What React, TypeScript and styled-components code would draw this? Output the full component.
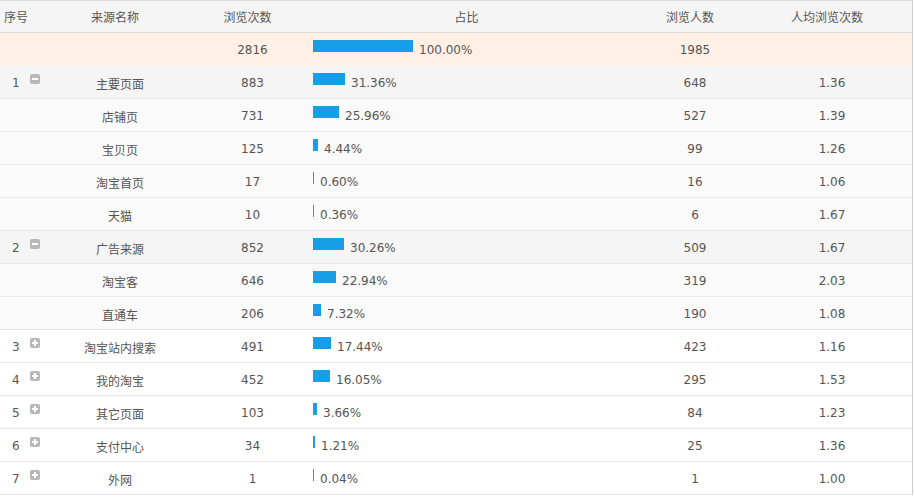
import React from "react";
import styled, { createGlobalStyle } from "styled-components";

const GlobalStyle = createGlobalStyle`
  html, body {
    margin: 0;
    padding: 0;
    background: #fff;
  }
  body {
    font-family: "DejaVu Sans", "Noto Sans CJK SC", sans-serif;
    font-size: 12px;
    color: #555;
  }
`;

interface SourceRow {
  no?: number;
  name: string;
  pv: number;
  pct: number;
  uv: number;
  avg: string;
  kind: "group" | "child" | "closed";
}

const rows: SourceRow[] = [
  { no: 1, name: "主要页面", pv: 883, pct: 31.36, uv: 648, avg: "1.36", kind: "group" },
  { name: "店铺页", pv: 731, pct: 25.96, uv: 527, avg: "1.39", kind: "child" },
  { name: "宝贝页", pv: 125, pct: 4.44, uv: 99, avg: "1.26", kind: "child" },
  { name: "淘宝首页", pv: 17, pct: 0.6, uv: 16, avg: "1.06", kind: "child" },
  { name: "天猫", pv: 10, pct: 0.36, uv: 6, avg: "1.67", kind: "child" },
  { no: 2, name: "广告来源", pv: 852, pct: 30.26, uv: 509, avg: "1.67", kind: "group" },
  { name: "淘宝客", pv: 646, pct: 22.94, uv: 319, avg: "2.03", kind: "child" },
  { name: "直通车", pv: 206, pct: 7.32, uv: 190, avg: "1.08", kind: "child" },
  { no: 3, name: "淘宝站内搜索", pv: 491, pct: 17.44, uv: 423, avg: "1.16", kind: "closed" },
  { no: 4, name: "我的淘宝", pv: 452, pct: 16.05, uv: 295, avg: "1.53", kind: "closed" },
  { no: 5, name: "其它页面", pv: 103, pct: 3.66, uv: 84, avg: "1.23", kind: "closed" },
  { no: 6, name: "支付中心", pv: 34, pct: 1.21, uv: 25, avg: "1.36", kind: "closed" },
  { no: 7, name: "外网", pv: 1, pct: 0.04, uv: 1, avg: "1.00", kind: "closed" },
];

const COLS = "40px 160px 105px 333px 114px 160px";

const Table = styled.div`
  width: 912px;
  border-top: 1px solid #dcdcdc;
  border-right: 1px solid #cfcfcf;
`;

const HeadRow = styled.div`
  display: grid;
  grid-template-columns: ${COLS};
  height: 31px;
  background: #f5f5f5;
  border-bottom: 1px solid #d8d8d8;
`;

const HeadCell = styled.div<{ $left?: boolean }>`
  display: flex;
  align-items: center;
  justify-content: ${(p) => (p.$left ? "flex-start" : "center")};
  padding: ${(p) => (p.$left ? "0 0 0 4px" : "0 10px 0 0")};
  white-space: nowrap;
  color: #555;
`;

const bgFor = {
  total: "#fff0e6",
  group: "#f5f5f5",
  child: "#fafafa",
  closed: "#ffffff",
};

const Row = styled.div<{ $kind: keyof typeof bgFor }>`
  display: grid;
  grid-template-columns: ${COLS};
  height: 32px;
  background: ${(p) => bgFor[p.$kind]};
  border-bottom: 1px solid ${(p) => (p.$kind === "total" ? "#fff0e6" : "#e8e8e8")};
`;

const Cell = styled.div`
  display: flex;
  align-items: center;
  justify-content: center;
  padding-top: 2px;
  white-space: nowrap;
`;

const IndexCell = styled.div`
  display: flex;
  align-items: center;
  padding: 2px 0 0 12px;
  overflow: visible;
  white-space: nowrap;
`;

const IndexNum = styled.span`
  width: 19px;
`;

const Toggle = styled.span<{ $open?: boolean }>`
  align-self: flex-start;
  margin-top: 6px;
  width: 10px;
  height: 10px;
  border-radius: 2px;
  background: #b8b8b8;
  position: relative;
  flex: none;
  &::before,
  &::after {
    content: "";
    position: absolute;
    background: #fff;
  }
  &::before {
    left: 2px;
    right: 2px;
    top: 4px;
    height: 2px;
  }
  &::after {
    display: ${(p) => (p.$open ? "none" : "block")};
    top: 2px;
    bottom: 2px;
    left: 4px;
    width: 2px;
  }
`;

const RatioCell = styled.div`
  display: flex;
  align-items: center;
  padding: 2px 0 0 8px;
  white-space: nowrap;
`;

const Bar = styled.span`
  display: block;
  height: 12px;
  background: #169fe6;
  margin-bottom: 8px;
  margin-right: 6px;
  flex: none;
`;

function Ratio({ pct }: { pct: number }) {
  const w = Math.max(1, Math.ceil(pct));
  return (
    <RatioCell>
      <Bar style={{ width: w }} />
      {pct.toFixed(2)}%
    </RatioCell>
  );
}

export default function App() {
  return (
    <>
      <GlobalStyle />
      <Table>
        <HeadRow>
          <HeadCell $left>序号</HeadCell>
          <HeadCell>来源名称</HeadCell>
          <HeadCell>浏览次数</HeadCell>
          <HeadCell>占比</HeadCell>
          <HeadCell>浏览人数</HeadCell>
          <HeadCell>人均浏览次数</HeadCell>
        </HeadRow>
        <Row $kind="total">
          <Cell />
          <Cell />
          <Cell>2816</Cell>
          <Ratio pct={100} />
          <Cell>1985</Cell>
          <Cell />
        </Row>
        {rows.map((r, i) => (
          <Row $kind={r.kind} key={i}>
            {r.no ? (
              <IndexCell>
                <IndexNum>{r.no}</IndexNum>
                <Toggle $open={r.kind === "group"} />
              </IndexCell>
            ) : (
              <Cell />
            )}
            <Cell>{r.name}</Cell>
            <Cell>{r.pv}</Cell>
            <Ratio pct={r.pct} />
            <Cell>{r.uv}</Cell>
            <Cell>{r.avg}</Cell>
          </Row>
        ))}
      </Table>
    </>
  );
}
